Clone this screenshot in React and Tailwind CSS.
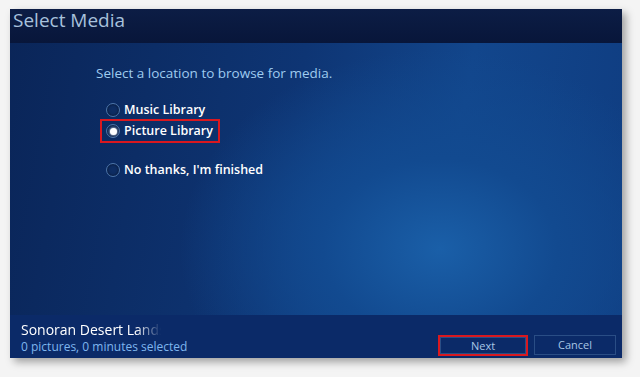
import { useState } from "react";

const options = ["Music Library", "Picture Library", "No thanks, I'm finished"];

function Radio({ checked }) {
  return (
    <span className="relative flex h-[14px] w-[14px] shrink-0 items-center justify-center rounded-full border border-[#4d74a8] bg-[#0e2d63] shadow-[inset_0_0_3px_rgba(0,0,0,0.6)]">
      {checked && <span className="h-[7px] w-[7px] rounded-full bg-white shadow-[0_0_3px_#fff]" />}
    </span>
  );
}

export default function App() {
  const [choice, setChoice] = useState(1);

  return (
    <div className="h-[377px] w-[640px] bg-[#f4f4f4] pl-[10px] pt-[9px] font-['Open_Sans',sans-serif]">
      <div className="flex h-[349px] w-[612px] flex-col bg-[radial-gradient(ellipse_260px_200px_at_430px_240px,#1a5fa8_0%,#124a90_45%,transparent_100%),linear-gradient(100deg,#0a2558_0%,#0e3574_45%,#12468c_70%,#0f3c80_100%)] shadow-[4px_4px_8px_rgba(0,0,0,0.35)]">
        <div className="h-[34px] bg-[linear-gradient(180deg,#0c1d45_0%,#08163a_100%)] pl-[3px]">
          <h1 className="text-[19px] leading-[22px] text-[#a7c1dc]">Select Media</h1>
        </div>

        <div className="flex-1 pl-[90px] pt-[21px]">
          <p className="-ml-[4px] text-[13.5px] leading-[18px] text-[#9fcbef]">Select a location to browse for media.</p>
          <div className="mt-[19px] flex flex-col">
            {options.map((label, i) => (
              <button
                key={label}
                onClick={() => setChoice(i)}
                className={`flex w-fit items-center gap-[4px] border-2 pl-[4px] pr-[5px] text-[12.5px] font-semibold text-white ${
                  i === 2 ? "mt-[18px]" : ""
                } ${i === choice ? "h-[24px] border-[#d9181f]" : "h-[18px] border-transparent"}`}
              >
                <Radio checked={i === choice} />
                {label}
              </button>
            ))}
          </div>
        </div>

        <div className="flex h-[43px] items-end justify-between bg-[#0b2a68] pb-[2px] pl-[11px] pr-[6px]">
          <div className="flex flex-col pb-[1px]">
            <span className="w-[140px] overflow-hidden whitespace-nowrap text-[14px] font-medium leading-[19px] text-white [mask-image:linear-gradient(90deg,#000_82%,transparent)]">
              Sonoran Desert Landscapes
            </span>
            <span className="text-[12px] leading-[16px] text-[#7fb6ef]">0 pictures, 0 minutes selected</span>
          </div>
          <div className="flex gap-[6px]">
            <button className="h-[21px] w-[90px] border-2 border-[#d9181f] text-[11px] font-medium text-[#a8c6e6]">
              <span className="block h-full w-full border border-[#2a4d85]">Next</span>
            </button>
            <button className="h-[20px] w-[82px] border border-[#2a4d85] text-[11px] font-medium text-[#a8c6e6]">Cancel</button>
          </div>
        </div>
      </div>
    </div>
  );
}
